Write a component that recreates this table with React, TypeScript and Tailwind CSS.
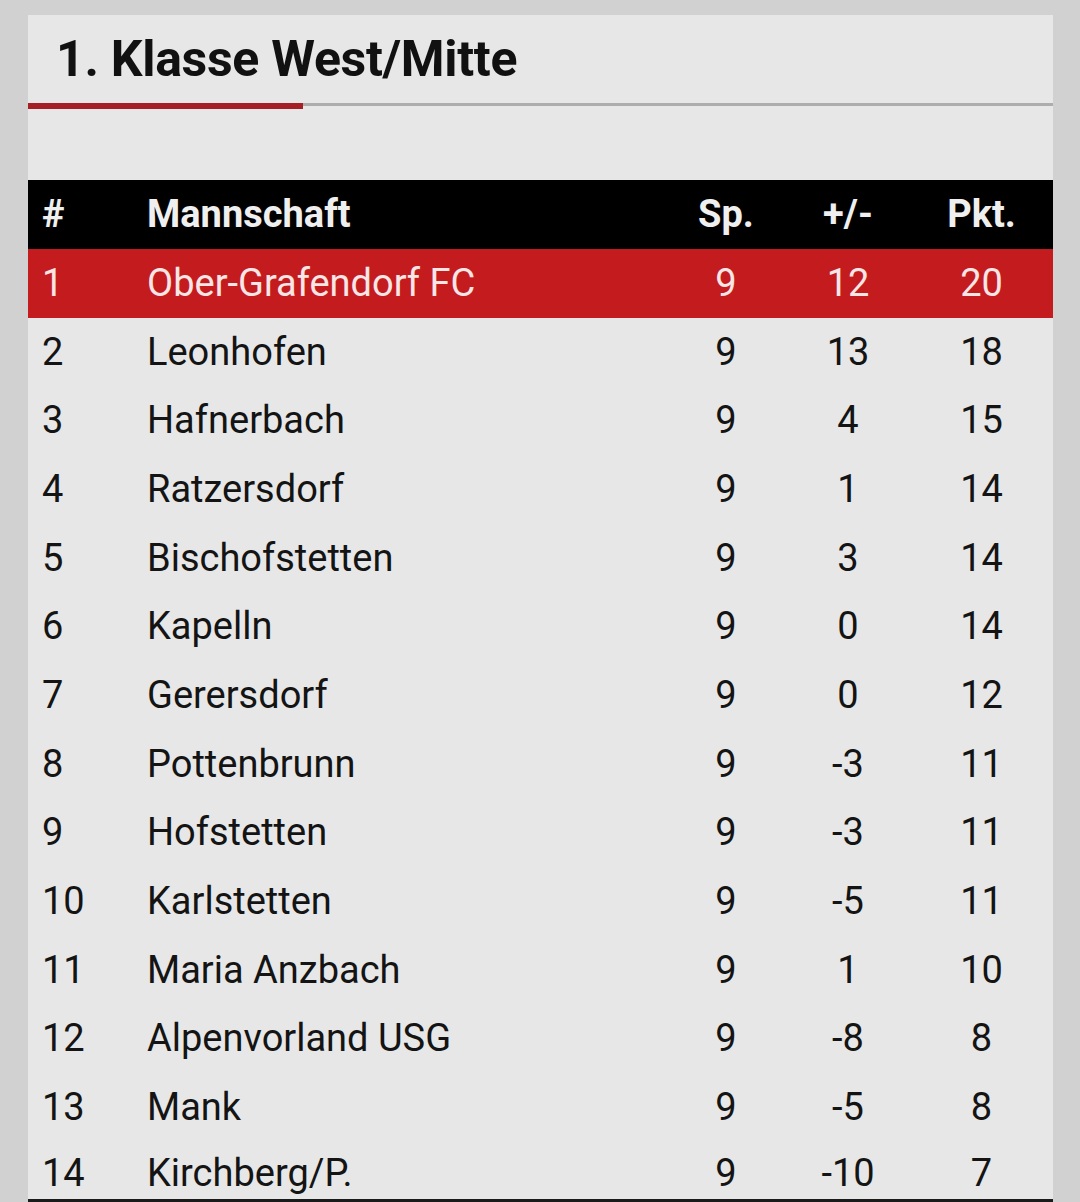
const ROWS: [number, string, number, number, number][] = [
  [1, "Ober-Grafendorf FC", 9, 12, 20],
  [2, "Leonhofen", 9, 13, 18],
  [3, "Hafnerbach", 9, 4, 15],
  [4, "Ratzersdorf", 9, 1, 14],
  [5, "Bischofstetten", 9, 3, 14],
  [6, "Kapelln", 9, 0, 14],
  [7, "Gerersdorf", 9, 0, 12],
  [8, "Pottenbrunn", 9, -3, 11],
  [9, "Hofstetten", 9, -3, 11],
  [10, "Karlstetten", 9, -5, 11],
  [11, "Maria Anzbach", 9, 1, 10],
  [12, "Alpenvorland USG", 9, -8, 8],
  [13, "Mank", 9, -5, 8],
  [14, "Kirchberg/P.", 9, -10, 7],
];

const GRID = "grid grid-cols-[119px_519px_120px_124px_143px] items-center";

export default function App() {
  return (
    <div
      className="h-[1202px] overflow-hidden bg-[#d1d1d1] pl-[28px] pr-[27px] pt-[15px]"
      style={{ fontFamily: "Roboto, 'Liberation Sans', sans-serif" }}
    >
      <div className="h-full bg-[#e7e7e7]">
        <div className="flex h-[88px] items-center pl-[28px]">
          <h1 className="text-[50px] font-bold leading-none tracking-[-0.3px] text-[#111]">
            1. Klasse West/Mitte
          </h1>
        </div>
        <div className="flex h-[6px] items-start">
          <div className="h-[6px] w-[275px] bg-[#a51f24]" />
          <div className="h-[3px] flex-1 bg-[#adadad]" />
        </div>
        <div className="h-[71px]" />
        <div className={`${GRID} h-[69px] bg-black text-[38px] font-bold text-[#efefef]`}>
          <div className="pl-[14px]">#</div>
          <div>Mannschaft</div>
          <div className="text-center">Sp.</div>
          <div className="text-center">+/-</div>
          <div className="text-center">Pkt.</div>
        </div>
        {ROWS.map(([rank, team, games, diff, pts], i) => {
          const first = i === 0;
          const last = i === ROWS.length - 1;
          return (
            <div
              key={rank}
              className={`${GRID} text-[38px] ${
                first ? "bg-[#c41c1e] text-[#f8e6e6]" : "text-[#141414]"
              } ${last ? "h-[60px] border-b-[3px] border-[#1a1a1a] pt-[3px]" : "h-[68.7px]"}`}
            >
              <div className="pl-[14px]">{rank}</div>
              <div>{team}</div>
              <div className="text-center">{games}</div>
              <div className="text-center">{diff}</div>
              <div className="text-center">{pts}</div>
            </div>
          );
        })}
      </div>
    </div>
  );
}
